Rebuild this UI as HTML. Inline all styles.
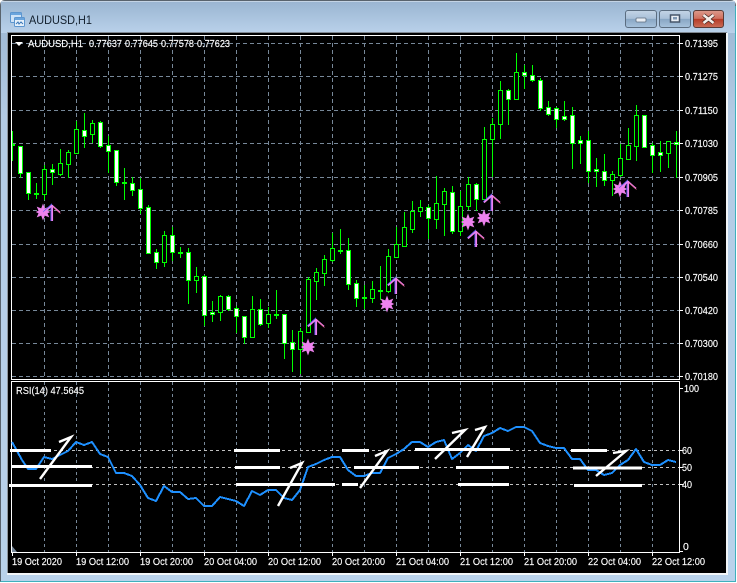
<!DOCTYPE html>
<html><head><meta charset="utf-8"><style>
html,body{margin:0;padding:0;background:#fff;width:737px;height:583px;overflow:hidden}
svg{display:block;position:absolute;left:0;top:0}
text{font-family:"Liberation Sans",sans-serif;font-size:10.500px;fill:#fff;stroke:#fff;stroke-width:.15}
</style></head><body>
<svg width="737" height="583" viewBox="0 0 737 583" xmlns="http://www.w3.org/2000/svg">
<defs>
<linearGradient id="t" x1="0" y1="0" x2="0" y2="1"><stop offset="0" stop-color="#9ab5d1"/><stop offset="1" stop-color="#b9d1ea"/></linearGradient>
<linearGradient id="s" x1="0" y1="0" x2="0" y2="1"><stop offset="0" stop-color="#9ab5d1"/><stop offset=".2" stop-color="#b3cbe4"/><stop offset="1" stop-color="#b9d2eb"/></linearGradient>
<linearGradient id="b1" x1="0" y1="0" x2="0" y2="1"><stop offset="0" stop-color="#c3d4e6"/><stop offset=".48" stop-color="#a9c0d8"/><stop offset=".5" stop-color="#88a6c4"/><stop offset="1" stop-color="#a8c3dd"/></linearGradient>
<linearGradient id="b2" x1="0" y1="0" x2="0" y2="1"><stop offset="0" stop-color="#dc9a8c"/><stop offset=".48" stop-color="#cf6f5e"/><stop offset=".5" stop-color="#b53a26"/><stop offset="1" stop-color="#cb6d58"/></linearGradient>
<g id="star"><path d="M0-8.500L1.800-3.600 6.300-5.400 4.500-1.400 7.200 0 4.500 1.400 6.300 5.400 1.800 3.600 0 8.500-1.800 3.600-6.300 5.400-4.500 1.400-7.200 0-4.500-1.400-6.300-5.400-1.800-3.600z" fill="#ee82ee"/></g>
<g id="arrow" fill="none" stroke-width="1.500"><path d="M-8.500 8L-.8 1-.8 17" stroke="#5a5af0"/><path d="M-8 8.500L0 1.500 8 8.500" stroke="#ee82ee"/><path d="M.2 1V17" stroke="#ee82ee" stroke-width="1.700"/><path d="M1 3L8.500 9.500" stroke="#e0608a" stroke-width=".7"/></g>
</defs>

<!-- window frame -->
<path d="M5 .5H730Q735.500 .5 735.500 6V581.500H.5V6Q.5 .5 5 .5z" fill="url(#s)" stroke="#59636d"/>
<rect x="1" y="1" width="734" height="32" fill="url(#t)"/>
<path d="M735.500 6V581.500H.5" fill="none" stroke="#3fb0bd"/>
<rect x="1" y="1" width="734" height="1" fill="#dfe8f1" opacity=".6"/>
<rect x="7" y="32" width="720" height="1" fill="#7f8790"/>
<rect x="7" y="32" width="1" height="542" fill="#8e959c"/>
<rect x="726" y="33" width="2" height="542" fill="#f2f5f8"/>
<rect x="7" y="573" width="721" height="2" fill="#f2f5f8"/>
<rect x="8" y="33" width="718" height="540" fill="#000"/>

<!-- title -->
<g>
<rect x="10.500" y="12.500" width="11" height="10" rx="1" fill="#cfe3f7" stroke="#5d96cf"/>
<rect x="11" y="13" width="10" height="2" fill="#6ba5dd"/>
<rect x="14.500" y="17.500" width="10" height="9" rx="1" fill="#e6f1fb" stroke="#5d96cf"/>
<rect x="15" y="18" width="9" height="2" fill="#6ba5dd"/>
<path d="M16 24l2-2 1 2 2-2 2 2" fill="none" stroke="#3d79b8"/>
</g>
<text x="29" y="24" textLength="63" lengthAdjust="spacingAndGlyphs" style="font-size:12px;fill:#13202e;stroke:none">AUDUSD,H1</text>

<!-- buttons -->
<rect x="625.500" y="10.500" width="31" height="17" rx="2.500" fill="url(#b1)" stroke="#5b6d80"/>
<rect x="659.500" y="10.500" width="31" height="17" rx="2.500" fill="url(#b1)" stroke="#5b6d80"/>
<rect x="693.500" y="10.500" width="30" height="17" rx="2.500" fill="url(#b2)" stroke="#5a3a36"/>
<rect x="636" y="18" width="10" height="4" rx="1" fill="#e9eef4" stroke="#5c6c7e" stroke-width=".8"/>
<rect x="670.500" y="15" width="9" height="7" fill="#e9eef4" stroke="#47566a" stroke-width="1.500"/>
<rect x="673" y="17" width="4" height="2.500" fill="#7f98b3"/>
<path d="M703.500 15L713.500 23M713.500 15L703.500 23" stroke="#3b1f1a" stroke-width="4"/>
<path d="M703.500 15L713.500 23M713.500 15L703.500 23" stroke="#f4eeea" stroke-width="2.600"/>

<!-- grid -->
<path d="M12 43.500H679M12 76.500H679M12 110.500H679M12 143.500H679M12 177.500H679M12 210.500H679M12 244.500H679M12 277.500H679M12 310.500H679M12 343.500H679M12 376.500H679" stroke="#778899" stroke-dasharray="4 3" fill="none"/>
<path d="M44.500 36V379M76.500 36V379M108.500 36V379M140.500 36V379M172.500 36V379M204.500 36V379M236.500 36V379M268.500 36V379M300.500 36V379M332.500 36V379M364.500 36V379M396.500 36V379M428.500 36V379M460.500 36V379M492.500 36V379M524.500 36V379M556.500 36V379M588.500 36V379M620.500 36V379M652.500 36V379" stroke="#778899" stroke-dasharray="4 3" fill="none"/>
<path d="M44.500 382V552M76.500 382V552M108.500 382V552M140.500 382V552M172.500 382V552M204.500 382V552M236.500 382V552M268.500 382V552M300.500 382V552M332.500 382V552M364.500 382V552M396.500 382V552M428.500 382V552M460.500 382V552M492.500 382V552M524.500 382V552M556.500 382V552M588.500 382V552M620.500 382V552M652.500 382V552" stroke="#778899" stroke-dasharray="3 3" fill="none"/>
<path d="M12 450.500H679M12 467.500H679M12 484.500H679" stroke="#c0c0c0" stroke-dasharray="3 3" fill="none"/>

<!-- wicks -->
<path stroke="#00ff00" fill="none" d="M12.500 131V161M20.500 146V178M28.500 172V200M36.500 183V199M44.500 165V200M52.500 164V185M60.500 149V176M68.500 150V178M76.500 121V154M84.500 113V148M92.500 120V143M100.500 121V148M108.500 136V173M116.500 150V186M124.500 168V200M132.500 177V196M140.500 178V214M148.500 205V254M156.500 249V269M164.500 231V267M172.500 227V261M180.500 247V258M188.500 248V304M196.500 267V293M204.500 275V326M212.500 301V322M220.500 295V321M228.500 295V311M236.500 306V333M244.500 316V344M252.500 296V338M260.500 299V326M268.500 307V328M276.500 290V319M284.500 314V359M292.500 330V372M300.500 328V374M308.500 277V333M316.500 268V300M324.500 255V286M332.500 233V262M340.500 229V254M348.500 238V290M356.500 280V307M364.500 285V309M372.500 281V303M380.500 266V300M388.500 249V293M396.500 227V258M404.500 212V247M412.500 201V233M420.500 200V217M428.500 205V239M436.500 176V229M444.500 188V236M452.500 186V234M460.500 191V236M468.500 177V210M476.500 183V211M484.500 127V201M492.500 118V177M500.500 81V139M508.500 89V125M516.500 53V100M524.500 65V89M532.500 65V82M540.500 78V111M548.500 101V116M556.500 107V128M564.500 101V121M572.500 107V169M580.500 136V164M588.500 131V183M596.500 158V187M604.500 154V186M612.500 171V196M620.500 144V177M628.500 128V160M636.500 105V161M652.500 143V173M660.500 141V172M668.500 142V168M676.500 131V178"/>
<!-- doji -->
<path fill="#00ff00" d="M12 144h3v2h-3zM34 193h5v2h-5zM122 182h5v2h-5zM178 252h5v2h-5zM274 314h5v2h-5zM338 250h5v2h-5zM362 297h5v2h-5zM378 290h5v2h-5z"/>
<!-- white bodies -->
<path fill="#fff" stroke="#00ff00" d="M18.500 146.500h4v27h-4zM26.500 172.500h4v21h-4zM50.500 169.500h4v3h-4zM82.500 130.500h4v6h-4zM98.500 122.500h4v24h-4zM106.500 145.500h4v6h-4zM114.500 150.500h4v32h-4zM130.500 183.500h4v7h-4zM138.500 189.500h4v19h-4zM146.500 207.500h4v46h-4zM154.500 252.500h4v10h-4zM170.500 235.500h4v17h-4zM186.500 252.500h4v28h-4zM202.500 276.500h4v39h-4zM210.500 312.500h4v2h-4zM226.500 296.500h4v13h-4zM234.500 308.500h4v8h-4zM242.500 316.500h4v21h-4zM258.500 309.500h4v15h-4zM282.500 314.500h4v29h-4zM290.500 342.500h4v7h-4zM346.500 250.500h4v34h-4zM354.500 283.500h4v15h-4zM426.500 207.500h4v11h-4zM450.500 192.500h4v39h-4zM474.500 184.500h4v15h-4zM506.500 90.500h4v9h-4zM522.500 72.500h4v3h-4zM530.500 75.500h4v5h-4zM538.500 80.500h4v28h-4zM546.500 107.500h4v7h-4zM554.500 108.500h4v11h-4zM562.500 116.500h4v3h-4zM570.500 115.500h4v28h-4zM578.500 140.500h4v3h-4zM586.500 140.500h4v31h-4zM594.500 169.500h4v2h-4zM602.500 171.500h4v9h-4zM642.500 115.500h4v32h-4zM650.500 145.500h4v10h-4zM658.500 152.500h4v3h-4zM674.500 142.500h4v2h-4z"/>
<!-- black bodies -->
<path fill="#000" stroke="#00ff00" d="M42.500 169.500h4v25h-4zM58.500 163.500h4v11h-4zM66.500 152.500h4v12h-4zM74.500 129.500h4v24h-4zM90.500 123.500h4v11h-4zM162.500 235.500h4v27h-4zM194.500 276.500h4v4h-4zM218.500 296.500h4v16h-4zM250.500 309.500h4v28h-4zM266.500 314.500h4v9h-4zM298.500 331.500h4v18h-4zM306.500 279.500h4v53h-4zM314.500 272.500h4v9h-4zM322.500 259.500h4v14h-4zM330.500 248.500h4v12h-4zM370.500 289.500h4v9h-4zM386.500 256.500h4v35h-4zM394.500 244.500h4v13h-4zM402.500 227.500h4v19h-4zM410.500 211.500h4v18h-4zM418.500 207.500h4v4h-4zM434.500 203.500h4v16h-4zM442.500 191.500h4v13h-4zM458.500 206.500h4v25h-4zM466.500 184.500h4v22h-4zM482.500 139.500h4v60h-4zM490.500 124.500h4v15h-4zM498.500 90.500h4v34h-4zM514.500 72.500h4v27h-4zM610.500 174.500h4v6h-4zM618.500 158.500h4v17h-4zM626.500 145.500h4v14h-4zM634.500 115.500h4v31h-4zM666.500 141.500h4v12h-4z"/>

<!-- stars & arrows -->
<use href="#star" x="43" y="212"/><use href="#arrow" x="52" y="204"/>
<use href="#star" x="308" y="347"/><use href="#arrow" x="316" y="318"/>
<use href="#star" x="387" y="304"/><use href="#arrow" x="396" y="277"/>
<use href="#star" x="468" y="222"/><use href="#star" x="484" y="218"/>
<use href="#arrow" x="476" y="230"/><use href="#arrow" x="492" y="194"/>
<use href="#star" x="620" y="189"/><use href="#arrow" x="628" y="180"/>

<!-- axes / frame -->
<rect x="11.500" y="35.500" width="668" height="344" fill="none" stroke="#fff"/>
<rect x="11.500" y="381.500" width="668" height="171" fill="none" stroke="#fff"/>
<path stroke="#fff" fill="none" d="M680 43.500h3M680 76.500h3M680 110.500h3M680 143.500h3M680 177.500h3M680 210.500h3M680 244.500h3M680 277.500h3M680 310.500h3M680 343.500h3M680 376.500h3M680 388.500h3M680 450.500h3M680 467.500h3M680 484.500h3M680 551.500h3M12.500 553v3M76.500 553v3M140.500 553v3M204.500 553v3M268.500 553v3M332.500 553v3M396.500 553v3M460.500 553v3M524.500 553v3M588.500 553v3M652.500 553v3"/>
<path d="M15 42h8l-4 4z" fill="#fff"/>
<path d="M12 546l5 6h-5z" fill="#778899"/>

<!-- RSI -->
<path fill="none" stroke="#1e90ff" stroke-width="2" stroke-linejoin="round" shape-rendering="crispEdges" d="M12 442L22 460 28 469 36 469 44 457 52 459 60 455 68 451 76 442 84 445 92 442 100 454 108 457 116 473 124 473 132 476 140 485 148 498 156 501 164 486 172 492 180 492 188 499 196 498 204 506 212 506 220 497 228 499 236 501 244 506 252 491 260 495 268 490 276 490 284 498 292 500 300 490 308 467 316 464 324 460 332 457 340 457 348 470 356 476 364 476 372 473 380 473 388 458 396 454 404 449 412 442 420 442 428 447 436 442 444 440 452 459 460 453 468 445 476 451 484 436 492 433 500 428 508 431 516 427 524 427 532 431 540 443 548 446 556 448 564 448 572 459 580 459 588 470 596 470 604 475 612 473 620 465 628 460 636 449 644 462 652 465 660 465 668 460 676 462"/>
<g stroke="#fff" stroke-width="3" fill="none">
<path d="M10 450.500H51M11 466.500H92M9 485.500H92"/>
<path d="M234 450.500H280M235 467.500H280M236 484.500H335M342 450.500H369M354 467.500H419M342 484.500H358"/>
<path d="M415 449.500H510M456 467.500H509M458 484.500H509"/>
<path d="M571 450.500H607M573 468H642M574 485.500H642"/>
<path stroke-width="2.400" d="M40 479L71 437 59 442M278 506L302 463 290 468M360 488L387 451 375 456M435 459L465 430 452 433M467 457L485 427 475 430M596 476L626 451 613 453"/>
</g>

<!-- text -->
<text x="28" y="47" textLength="55" lengthAdjust="spacingAndGlyphs">AUDUSD,H1</text>
<text x="89" y="47" textLength="33" lengthAdjust="spacingAndGlyphs">0.77637</text>
<text x="125" y="47" textLength="33" lengthAdjust="spacingAndGlyphs">0.77645</text>
<text x="161" y="47" textLength="33" lengthAdjust="spacingAndGlyphs">0.77578</text>
<text x="197" y="47" textLength="33" lengthAdjust="spacingAndGlyphs">0.77623</text>
<text x="16" y="394" textLength="68" lengthAdjust="spacingAndGlyphs">RSI(14) 47.5645</text>
<text x="685" y="47" textLength="33" lengthAdjust="spacingAndGlyphs">0.71395</text>
<text x="685" y="80" textLength="33" lengthAdjust="spacingAndGlyphs">0.71275</text>
<text x="685" y="114" textLength="33" lengthAdjust="spacingAndGlyphs">0.71150</text>
<text x="685" y="147" textLength="33" lengthAdjust="spacingAndGlyphs">0.71030</text>
<text x="685" y="181" textLength="33" lengthAdjust="spacingAndGlyphs">0.70905</text>
<text x="685" y="214" textLength="33" lengthAdjust="spacingAndGlyphs">0.70785</text>
<text x="685" y="248" textLength="33" lengthAdjust="spacingAndGlyphs">0.70660</text>
<text x="685" y="281" textLength="33" lengthAdjust="spacingAndGlyphs">0.70540</text>
<text x="685" y="314" textLength="33" lengthAdjust="spacingAndGlyphs">0.70420</text>
<text x="685" y="347" textLength="33" lengthAdjust="spacingAndGlyphs">0.70300</text>
<text x="685" y="380" textLength="33" lengthAdjust="spacingAndGlyphs">0.70180</text>
<text x="684" y="392" textLength="15" lengthAdjust="spacingAndGlyphs">100</text>
<text x="682" y="454" textLength="10" lengthAdjust="spacingAndGlyphs">60</text>
<text x="682" y="471" textLength="10" lengthAdjust="spacingAndGlyphs">50</text>
<text x="682" y="488" textLength="10" lengthAdjust="spacingAndGlyphs">40</text>
<text x="683" y="550">0</text>
<text x="12" y="565" textLength="50" lengthAdjust="spacingAndGlyphs">19 Oct 2020</text>
<text x="76" y="565" textLength="53" lengthAdjust="spacingAndGlyphs">19 Oct 12:00</text>
<text x="140" y="565" textLength="53" lengthAdjust="spacingAndGlyphs">19 Oct 20:00</text>
<text x="204" y="565" textLength="53" lengthAdjust="spacingAndGlyphs">20 Oct 04:00</text>
<text x="268" y="565" textLength="53" lengthAdjust="spacingAndGlyphs">20 Oct 12:00</text>
<text x="332" y="565" textLength="53" lengthAdjust="spacingAndGlyphs">20 Oct 20:00</text>
<text x="396" y="565" textLength="53" lengthAdjust="spacingAndGlyphs">21 Oct 04:00</text>
<text x="460" y="565" textLength="53" lengthAdjust="spacingAndGlyphs">21 Oct 12:00</text>
<text x="524" y="565" textLength="53" lengthAdjust="spacingAndGlyphs">21 Oct 20:00</text>
<text x="588" y="565" textLength="53" lengthAdjust="spacingAndGlyphs">22 Oct 04:00</text>
<text x="652" y="565" textLength="53" lengthAdjust="spacingAndGlyphs">22 Oct 12:00</text>
</svg>
</body></html>
